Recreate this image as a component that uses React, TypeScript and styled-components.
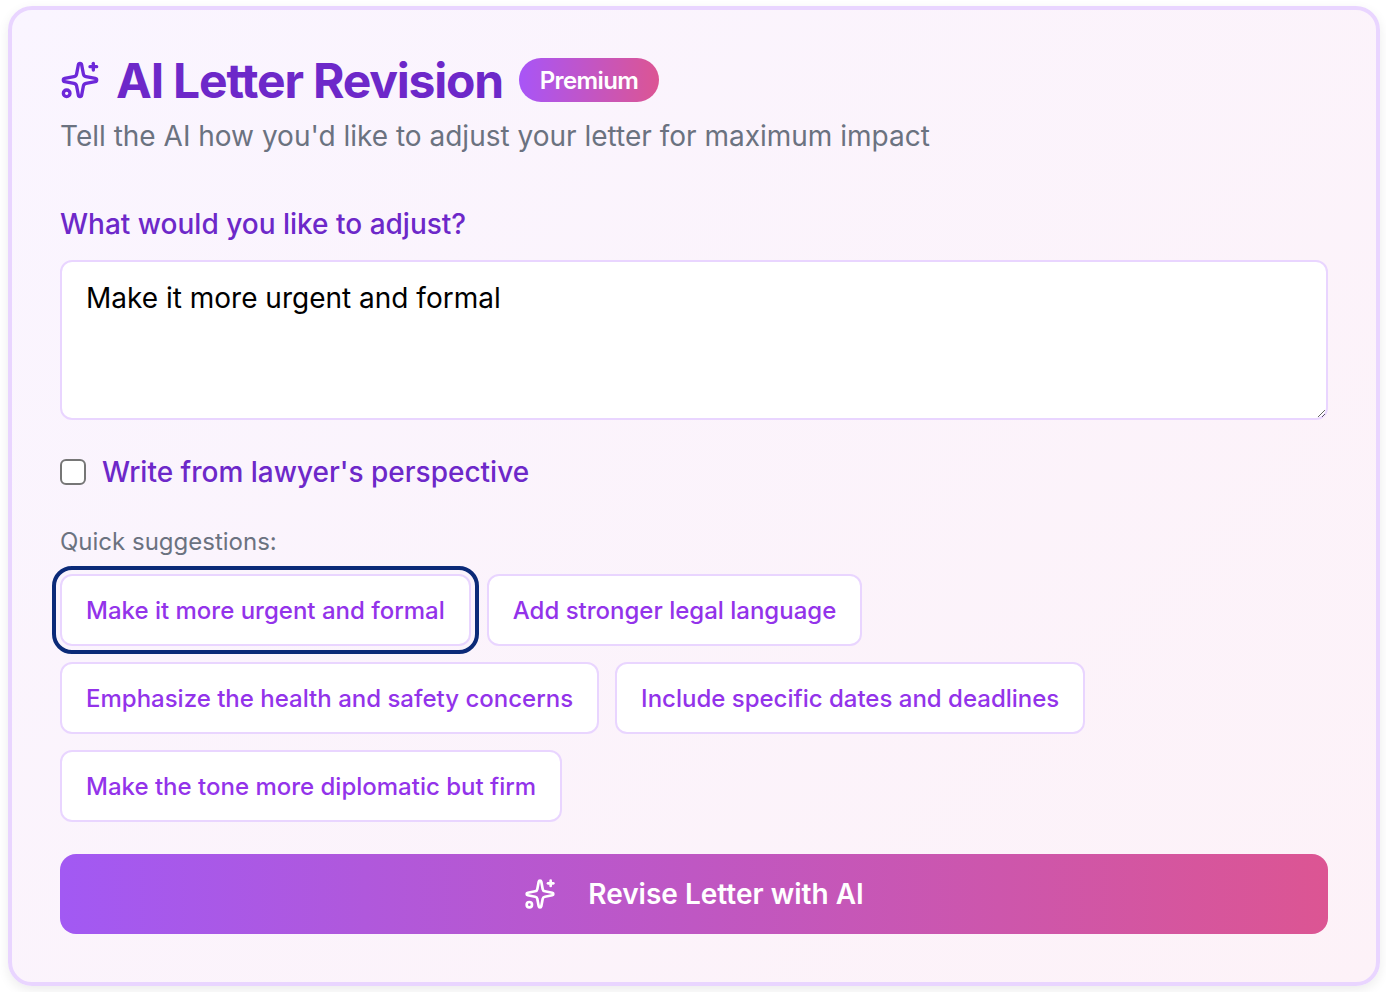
import { createGlobalStyle, styled } from "styled-components";
import { Sparkles } from "lucide-react";

const GlobalStyle = createGlobalStyle`
    * {
        box-sizing: border-box;
    }

    body {
        margin: 0;
        background-color: #ffffff;
        font-family: Inter, "Liberation Sans", sans-serif;
    }
`;

const StyledPage = styled.div`
    padding: 6px 6px 6px 8px;
`;

const StyledCard = styled.div`
    border: 4px solid #e9d5ff;
    border-radius: 24px;
    padding: 48px;
    background: linear-gradient(135deg, #faf5ff, #fdf2f8);
    box-shadow: 0 4px 12px rgba(0, 0, 0, .08);
`;

const StyledHeader = styled.div`
    display: flex;
    align-items: center;
    gap: 16px;
    height: 48px;
    color: #6d28d9;
    margin-top: -2px;
`;

const StyledTitle = styled.h1`
    margin: 0;
    font-size: 48px;
    font-weight: 700;
    letter-spacing: -1.2px;
    color: #6d28c9;
`;

const StyledBadge = styled.span`
    display: flex;
    align-items: center;
    justify-content: center;
    width: 140px;
    height: 44px;
    border-radius: 22px;
    background: linear-gradient(90deg, #a855f7, #dc5593);
    color: #ffffff;
    font-size: 24px;
    font-weight: 600;
    letter-spacing: -.6px;
`;

const StyledSubtitle = styled.p`
    margin: 12px 0 0 0;
    font-size: 28px;
    line-height: 40px;
    color: #6b7280;
`;

const StyledLabel = styled.label`
    display: block;
    margin-top: 48px;
    font-size: 28px;
    line-height: 40px;
    font-weight: 500;
    color: #6d28c9;
`;

const StyledTextarea = styled.textarea`
    display: block;
    width: 100%;
    height: 160px;
    margin-top: 16px;
    padding: 16px 24px;
    border: 2px solid #e9d5ff;
    border-radius: 12px;
    background-color: #ffffff;
    color: #000000;
    font-family: inherit;
    font-size: 28px;
    line-height: 40px;
    outline: none;
`;

const StyledCheckRow = styled.label`
    display: flex;
    align-items: center;
    gap: 16px;
    margin-top: 32px;
    font-size: 28px;
    line-height: 40px;
    font-weight: 500;
    color: #6d28c9;
`;

const StyledCheckbox = styled.input`
    appearance: none;
    width: 26px;
    height: 26px;
    margin: 0;
    border: 2px solid #767676;
    border-radius: 6px;
    background-color: #ffffff;
`;

const StyledHint = styled.p`
    margin: 32px 0 0 0;
    font-size: 24px;
    line-height: 36px;
    color: #6b7280;
`;

const StyledSuggestions = styled.div`
    display: flex;
    flex-wrap: wrap;
    gap: 16px;
    margin-top: 14px;
`;

const StyledSuggestion = styled.button<{ $focused?: boolean }>`
    height: 72px;
    padding: 0 24px;
    border: 2px solid #e9d5ff;
    border-radius: 12px;
    background-color: #ffffff;
    color: #9333ea;
    font-family: inherit;
    font-size: 24px;
    font-weight: 500;
    outline: ${(props) => (props.$focused ? "4px solid #0b2a78" : "none")};
    outline-offset: 4px;
`;

const StyledSubmit = styled.button`
    display: flex;
    align-items: center;
    justify-content: center;
    gap: 32px;
    width: 100%;
    height: 80px;
    margin-top: 32px;
    border: none;
    border-radius: 16px;
    background: linear-gradient(90deg, #a259f3, #dc5593);
    color: #ffffff;
    font-family: inherit;
    font-size: 28px;
    font-weight: 600;
`;

const suggestions = [
    "Make it more urgent and formal",
    "Add stronger legal language",
    "Emphasize the health and safety concerns",
    "Include specific dates and deadlines",
    "Make the tone more diplomatic but firm",
];

function App() {
    return (
        <StyledPage>
            <GlobalStyle />
            <StyledCard>
                <StyledHeader>
                    <Sparkles size={40} />
                    <StyledTitle>AI Letter Revision</StyledTitle>
                    <StyledBadge>Premium</StyledBadge>
                </StyledHeader>
                <StyledSubtitle>Tell the AI how you'd like to adjust your letter for maximum impact</StyledSubtitle>
                <StyledLabel>What would you like to adjust?</StyledLabel>
                <StyledTextarea defaultValue="Make it more urgent and formal" />
                <StyledCheckRow>
                    <StyledCheckbox type="checkbox" />
                    Write from lawyer's perspective
                </StyledCheckRow>
                <StyledHint>Quick suggestions:</StyledHint>
                <StyledSuggestions>
                    {suggestions.map((text, index) => (
                        <StyledSuggestion key={text} $focused={index === 0}>{text}</StyledSuggestion>
                    ))}
                </StyledSuggestions>
                <StyledSubmit>
                    <Sparkles size={32} />
                    Revise Letter with AI
                </StyledSubmit>
            </StyledCard>
        </StyledPage>
    );
}

export default App;
